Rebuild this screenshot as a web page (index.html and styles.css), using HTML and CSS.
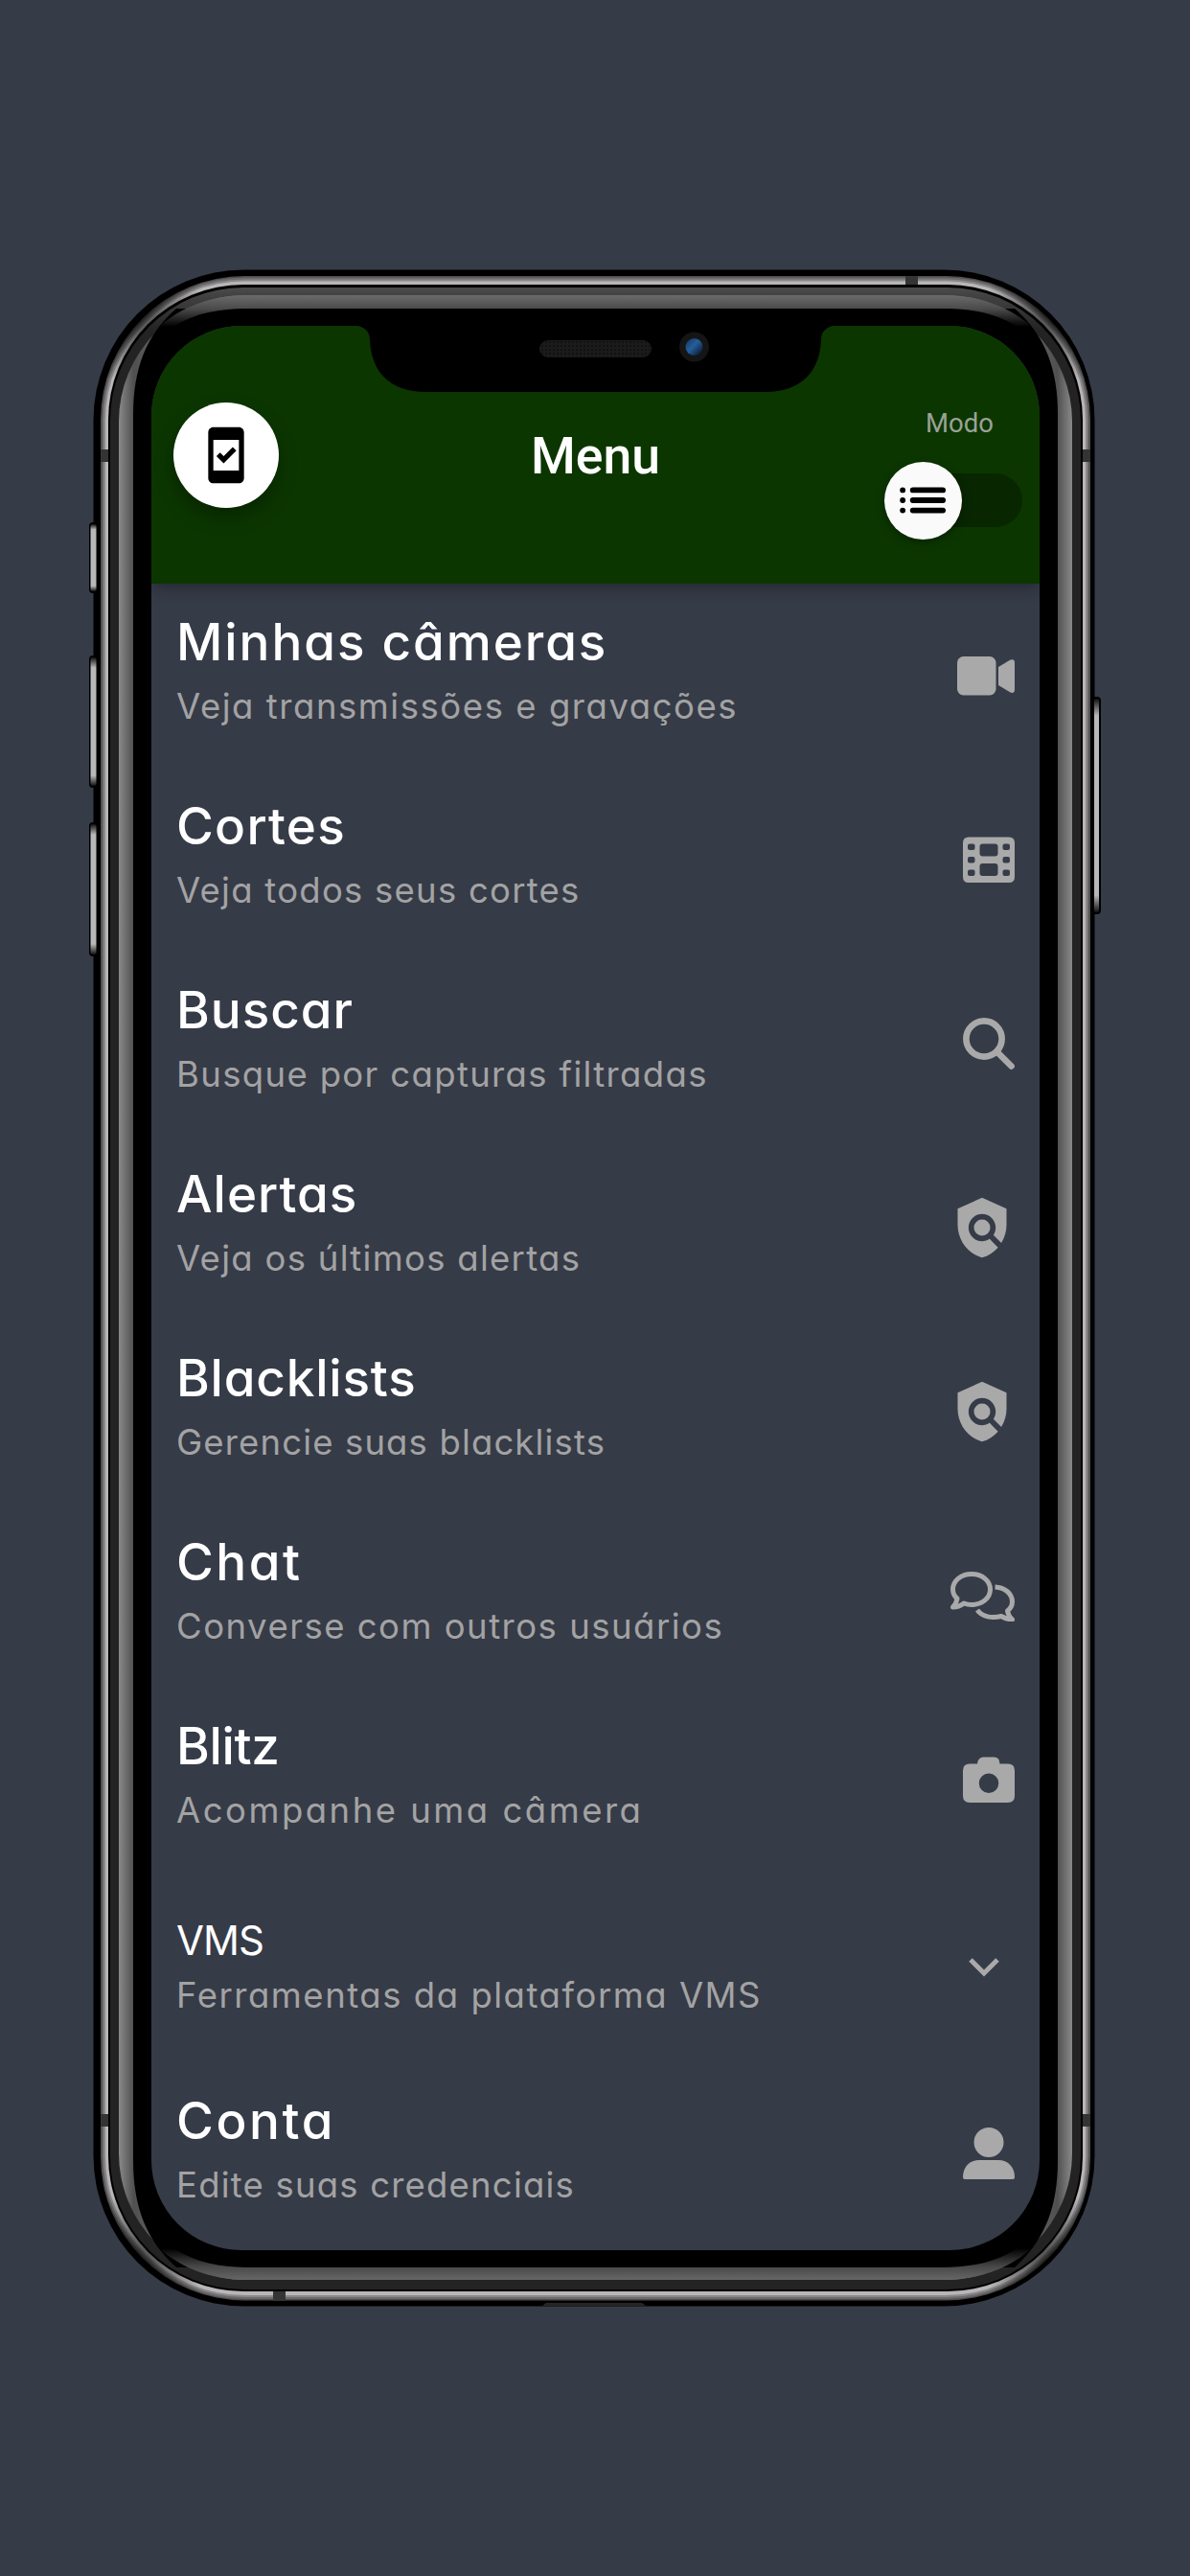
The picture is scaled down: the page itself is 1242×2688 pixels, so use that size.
FILE: index.html
```html
<!DOCTYPE html>
<html lang="pt-BR">
<head>
<meta charset="utf-8">
<title>Menu</title>
<link rel="stylesheet" href="styles.css">
</head>
<body>
<svg class="device" viewBox="0 0 1242 2688" aria-hidden="true">
  <defs>
    <linearGradient id="ring" gradientUnits="userSpaceOnUse" x1="0" y1="300" x2="0" y2="345">
      <stop offset="0" stop-color="#4c4c4c"/><stop offset=".18" stop-color="#424242"/><stop offset="1" stop-color="#232323"/>
    </linearGradient>
    <linearGradient id="side" gradientUnits="userSpaceOnUse" x1="124" y1="0" x2="1119" y2="0">
      <stop offset="0" stop-color="#898989"/><stop offset=".0155" stop-color="#505050"/><stop offset=".06" stop-color="#707070"/>
      <stop offset=".94" stop-color="#707070"/><stop offset=".9845" stop-color="#505050"/><stop offset="1" stop-color="#898989"/>
    </linearGradient>
    <linearGradient id="top" gradientUnits="userSpaceOnUse" x1="0" y1="308" x2="0" y2="341">
      <stop offset="0" stop-color="#6a6a6a"/><stop offset=".42" stop-color="#4c4c4c"/><stop offset="1" stop-color="#000"/>
    </linearGradient>
    <linearGradient id="bottom" gradientUnits="userSpaceOnUse" x1="0" y1="2379" x2="0" y2="2346">
      <stop offset="0" stop-color="#666"/><stop offset=".42" stop-color="#484848"/><stop offset="1" stop-color="#000"/>
    </linearGradient>
    <linearGradient id="key" x1="0" y1="0" x2="0" y2="1">
      <stop offset="0" stop-color="#111"/><stop offset=".08" stop-color="#b8b8b8"/><stop offset=".92" stop-color="#b8b8b8"/><stop offset="1" stop-color="#111"/>
    </linearGradient>
    <radialGradient id="shade"><stop offset="0" stop-color="#000" stop-opacity=".7"/><stop offset="1" stop-color="#000" stop-opacity="0"/></radialGradient>
    <clipPath id="body"><rect x="97.500" y="281.500" width="1045" height="2125" rx="157"/></clipPath>
    <linearGradient id="lens" x1="0" y1="0" x2="1" y2="1"><stop offset="0" stop-color="#16305c"/><stop offset=".45" stop-color="#255f9c"/><stop offset="1" stop-color="#050d20"/></linearGradient>
    <pattern id="mesh" width="4" height="4" patternUnits="userSpaceOnUse"><rect width="4" height="4" fill="#1b1b1b"/><rect width="2" height="2" fill="#111"/></pattern>
  </defs>
  <g fill="#000">
    <rect x="93" y="545" width="12" height="74" rx="4"/>
    <rect x="93" y="684" width="12" height="138" rx="4"/>
    <rect x="93" y="858" width="12" height="140" rx="4"/>
    <rect x="1137" y="727" width="12" height="227" rx="4"/>
  </g>
  <rect x="97.500" y="281.500" width="1045" height="2125" rx="157"/>
  <g fill="url(#key)">
    <rect x="94.500" y="547" width="6" height="70" rx="2"/>
    <rect x="94.500" y="686" width="6" height="134" rx="2"/>
    <rect x="94.500" y="860" width="6" height="136" rx="2"/>
    <rect x="1142" y="729" width="5" height="223" rx="2"/>
  </g>
  <rect x="105" y="288" width="1033" height="2112.500" rx="150" fill="#4f4e4f"/>
  <rect x="106.500" y="289.500" width="1030" height="2109.500" rx="148.500" fill="#6c6a6c"/>
  <rect x="108" y="291.500" width="1027" height="2105.500" rx="147" fill="#8a888a"/>
  <rect x="110" y="293.500" width="1023" height="2101.500" rx="145" fill="#b9b6b8"/>
  <g fill="url(#shade)" clip-path="url(#body)">
    <circle cx="138" cy="324" r="75"/><circle cx="1104" cy="324" r="75"/><circle cx="138" cy="2364" r="75"/><circle cx="1104" cy="2364" r="75"/>
  </g>
  <g fill="#343434">
    <rect x="105" y="469" width="8" height="13"/><rect x="1130" y="469" width="8" height="13"/>
    <rect x="105" y="2206" width="8" height="13"/><rect x="1130" y="2206" width="8" height="13"/>
    <rect x="945" y="288" width="13" height="9"/><rect x="285" y="2391" width="13" height="10"/>
  </g>
  <rect x="113" y="297" width="1017" height="2094" rx="141"/>
  <rect x="115" y="300" width="1013" height="2089" rx="139" fill="url(#ring)"/>
  <rect x="124" y="308" width="995" height="2071" rx="132" fill="url(#side)"/>
  <path d="M139 433C139 385 152 350 184 322H1059C1091 350 1104 385 1104 433V2254C1104 2302 1091 2337 1059 2366H184C152 2337 139 2302 139 2254Z"/>
  <path d="M166 341C190 320 220 308 260 308H983C1023 308 1053 320 1077 341H1062C1037 325 1010 322 983 322H260C233 322 206 325 181 341Z" fill="url(#top)"/>
  <path d="M166 2346C190 2367 220 2379 260 2379H983C1023 2379 1053 2367 1077 2346H1062C1037 2362 1010 2366 983 2366H260C233 2366 206 2362 181 2346Z" fill="url(#bottom)"/>
  <path d="M566 2406L570 2403H670L674 2406Z" fill="#262626"/>
</svg>
<main class="screen">
  <svg class="notch" viewBox="0 0 497 69" aria-hidden="true">
    <path d="M0 0H497C490 1 484 6 484 14C483 46 465 69 425 69H72C32 69 14 46 13 14C13 6 7 1 0 0Z"/>
    <rect x="190" y="15" width="117" height="18" rx="9" fill="url(#mesh)"/>
    <circle cx="351.500" cy="22" r="15.500" fill="#151515"/><circle cx="351.500" cy="22" r="9" fill="url(#lens)"/>
  </svg>
  <header class="bar">
    <button class="round" aria-label="Dispositivo"><svg viewBox="0 0 24 24"><path d="M17 1.010 7 1c-1.100 0-2 .9-2 2v18c0 1.100.9 2 2 2h10c1.100 0 2-.9 2-2V3c0-1.100-.9-1.990-2-1.990zM17 18H7V6h10zM16 10.240l-1.410-1.410-3.540 3.530-1.410-1.410-1.420 1.410L11.050 15.200z"/></svg></button>
    <h1>Menu</h1>
    <div class="mode"><span>Modo</span>
      <div class="track"><div class="knob"><svg viewBox="0 0 50 28"><g stroke="#000" stroke-width="6" stroke-linecap="round"><path d="M3.200 3.200h0M3.200 14h0M3.200 24.800h0M14 3.200H46M14 14H46M14 24.800H46"/></g></svg></div></div>
    </div>
  </header>
  <nav class="list">
    <a class="row"><span class="copy"><b style="letter-spacing:1.93px">Minhas câmeras</b><i style="letter-spacing:1.55px">Veja transmissões e gravações</i></span>
      <svg style="width:60px" viewBox="0 0 60 54"><rect y="7" width="40.500" height="40.500" rx="6.500"/><path d="M43 18 55.500 10.500Q60 9 60 13.500V41.500Q60 46 55.500 44.500L43 37Z"/></svg></a>
    <a class="row"><span class="copy"><b style="letter-spacing:1.25px">Cortes</b><i style="letter-spacing:1.25px">Veja todos seus cortes</i></span>
      <svg style="width:54px" viewBox="0 0 54 54"><path fill-rule="evenodd" d="M6 3.500H48Q54 3.500 54 9.500V45Q54 51 48 51H6Q0 51 0 45V9.500Q0 3.500 6 3.500ZM7 10.500Q5 10.500 5 12.500V15Q5 17 7 17H10.500Q12.500 17 12.500 15V12.500Q12.500 10.500 10.500 10.500ZM7 24Q5 24 5 26V28.500Q5 30.500 7 30.500H10.500Q12.500 30.500 12.500 28.500V26Q12.500 24 10.500 24ZM7 37.500Q5 37.500 5 39.500V42Q5 44 7 44H10.500Q12.500 44 12.500 42V39.500Q12.500 37.500 10.500 37.500ZM43.500 10.500Q41.500 10.500 41.500 12.500V15Q41.500 17 43.500 17H47Q49 17 49 15V12.500Q49 10.500 47 10.500ZM43.500 24Q41.500 24 41.500 26V28.500Q41.500 30.500 43.500 30.500H47Q49 30.500 49 28.500V26Q49 24 47 24ZM43.500 37.500Q41.500 37.500 41.500 39.500V42Q41.500 44 43.500 44H47Q49 44 49 42V39.500Q49 37.500 47 37.500ZM20.500 10.500Q17.500 10.500 17.500 13.500V20.500Q17.500 23.500 20.500 23.500H33.500Q36.500 23.500 36.500 20.500V13.500Q36.500 10.500 33.500 10.500ZM20.500 31Q17.500 31 17.500 34V41Q17.500 44 20.500 44H33.500Q36.500 44 36.500 41V34Q36.500 31 33.500 31Z"/></svg></a>
    <a class="row"><span class="copy"><b style="letter-spacing:1px">Buscar</b><i style="letter-spacing:1.35px">Busque por capturas filtradas</i></span>
      <svg style="width:54px" viewBox="0 0 54 54"><g fill="none" stroke="#a9a9a9" stroke-width="6.700" stroke-linecap="round"><circle cx="22" cy="22" r="18.600"/><path d="M36 36 50.500 50.500"/></g></svg></a>
    <a class="row"><span class="copy"><b style="letter-spacing:1px">Alertas</b><i style="letter-spacing:1.29px">Veja os últimos alertas</i></span>
      <svg class="shield" viewBox="0 0 24 24"><path d="M21 5l-9-4-9 4v6c0 5.550 3.840 10.740 9 12 2.300-.56 4.330-1.900 5.880-3.710l-3.120-3.120c-1.940 1.290-4.580 1.070-6.290-.64-1.950-1.950-1.950-5.120 0-7.070 1.950-1.950 5.120-1.950 7.070 0 1.710 1.710 1.920 4.350.64 6.290l2.900 2.900C20.290 15.690 21 13.380 21 11z"/><circle cx="12" cy="12" r="3"/></svg></a>
    <a class="row"><span class="copy"><b style="letter-spacing:.8px">Blacklists</b><i style="letter-spacing:1.14px">Gerencie suas blacklists</i></span>
      <svg class="shield" viewBox="0 0 24 24"><path d="M21 5l-9-4-9 4v6c0 5.550 3.840 10.740 9 12 2.300-.56 4.330-1.900 5.880-3.710l-3.120-3.120c-1.940 1.290-4.580 1.070-6.290-.64-1.950-1.950-1.950-5.120 0-7.070 1.950-1.950 5.120-1.950 7.070 0 1.710 1.710 1.920 4.350.64 6.290l2.900 2.900C20.290 15.690 21 13.380 21 11z"/><circle cx="12" cy="12" r="3"/></svg></a>
    <a class="row"><span class="copy"><b style="letter-spacing:2.5px">Chat</b><i style="letter-spacing:1.5px">Converse com outros usuários</i></span>
      <svg style="width:67px" viewBox="0 0 67 54"><g fill="none" stroke="#a9a9a9" stroke-width="5" stroke-linejoin="round"><path d="M22 4.500C33 4.500 41.500 11.500 41.500 20.500S33 36.500 22 36.500C19 36.500 16.500 36 14 35C10 38 6 39 2.500 39C5 36.500 6.500 33.500 7 30C4 27.500 2.500 24.500 2.500 20.500C2.500 11.500 11 4.500 22 4.500Z"/><path d="M46.500 18C57 18.500 64.500 25 64.500 33.500C64.500 37.500 62.500 40.500 59.500 43C60 46.500 62 49.500 64.500 52C60.500 52 56.500 50.500 53 48.500C43 51 33 49 28 42"/></g></svg></a>
    <a class="row"><span class="copy"><b style="letter-spacing:-.3px">Blitz</b><i style="letter-spacing:2.5px">Acompanhe uma câmera</i></span>
      <svg style="width:54px" viewBox="0 0 54 54"><path fill-rule="evenodd" d="M15.500 8 16.500 6Q18 3.500 21 3.500H33Q36 3.500 37.500 6L38.500 10.500H47Q54 10.500 54 17.500V44Q54 51 47 51H7Q0 51 0 44V17.500Q0 10.500 7 10.500H15ZM27 20.500A10.200 10.200 0 1 0 27 41A10.200 10.200 0 1 0 27 20.500Z"/></svg></a>
    <a class="row vms"><span class="copy"><b style="letter-spacing:-1px">VMS</b><i style="letter-spacing:1.53px">Ferramentas da plataforma VMS</i></span>
      <svg class="chevron" viewBox="0 0 64 54"><path d="M18 20 32 34 46 20" fill="none" stroke="#a9a9a9" stroke-width="5"/></svg></a>
    <a class="row"><span class="copy"><b style="letter-spacing:2.6px">Conta</b><i style="letter-spacing:1.2px">Edite suas credenciais</i></span>
      <svg style="width:54px" viewBox="0 0 54 54"><circle cx="27" cy="15.500" r="15.500"/><path d="M17 34H37C47 34 54 41 54 52Q54 54 52 54H2Q0 54 0 52C0 41 7 34 17 34Z"/></svg></a>
  </nav>
</main>
</body>
</html>
```
FILE: styles.css
```css
* { box-sizing: border-box; }
body {
  margin: 0;
  height: 2688px;
  padding: 340px 157px 340px 158px;
  background: #363b48;
  font-family: Inter, "Open Sans", sans-serif;
  font-feature-settings: "cv11";
}
.device { position: absolute; left: 0; top: 0; width: 1242px; height: 2688px; }
.screen {
  position: relative;
  height: 2008px;
  border-radius: 94px;
  overflow: hidden;
  background: #363b48;
}
.notch { position: absolute; left: 215px; top: 0; width: 497px; height: 69px; z-index: 2; }
.bar {
  position: relative;
  display: grid;
  grid-template-columns: 170px 1fr 170px;
  height: 268.5px;
  padding: 80px 18px 0 23px;
  background: #0b3600;
  box-shadow: 0 3px 16px rgba(0, 0, 0, .38);
}
.round {
  display: grid;
  place-items: center;
  width: 110px;
  height: 110px;
  padding: 0;
  border: 0;
  border-radius: 50%;
  background: #fff;
  box-shadow: 0 10px 20px rgba(0, 0, 0, .3);
}
.round svg { width: 64px; height: 64px; }
h1 {
  margin: 24px 5px 0 0;
  font: 500 53.5px/64px Roboto, sans-serif;
  text-align: center;
  color: #fff;
}
.mode { display: flex; flex-direction: column; align-items: flex-end; font: 400 27.5px/33px Roboto, sans-serif; color: #9ba298; }
.mode span { margin: 5px 30px 36px 0; }
.track { display: flex; align-items: center; width: 137px; height: 56px; border-radius: 28px; background: #082600; }
.knob {
  display: grid;
  place-items: center;
  flex: none;
  width: 81px;
  height: 81px;
  margin-left: -7px;
  border-radius: 50%;
  background: #fafafa;
  box-shadow: 0 3px 10px rgba(0, 0, 0, .35);
}
.knob svg { width: 49px; height: 28px; }
.list { display: flex; flex-direction: column; }
.row {
  display: flex;
  justify-content: space-between;
  align-items: center;
  height: 192px;
  padding: 0 26px;
  fill: #a9a9a9;
}
.row svg { flex: none; height: 54px; }
.row .shield { width: 68px; height: 68px; }
.row .chevron { width: 64px; }
.copy { display: flex; flex-direction: column; padding-bottom: 7px; white-space: nowrap; }
.copy b { font-size: 53px; line-height: 72px; font-weight: 500; color: #fff; }
.copy i { font-size: 36.5px; line-height: 62px; font-style: normal; color: #a3a3a3; }
.vms { height: 198.7px; }
.vms .copy { padding: 7.6px 0 0; }
.vms b { font-size: 42px; font-weight: 400; line-height: 53.4px; }
```
